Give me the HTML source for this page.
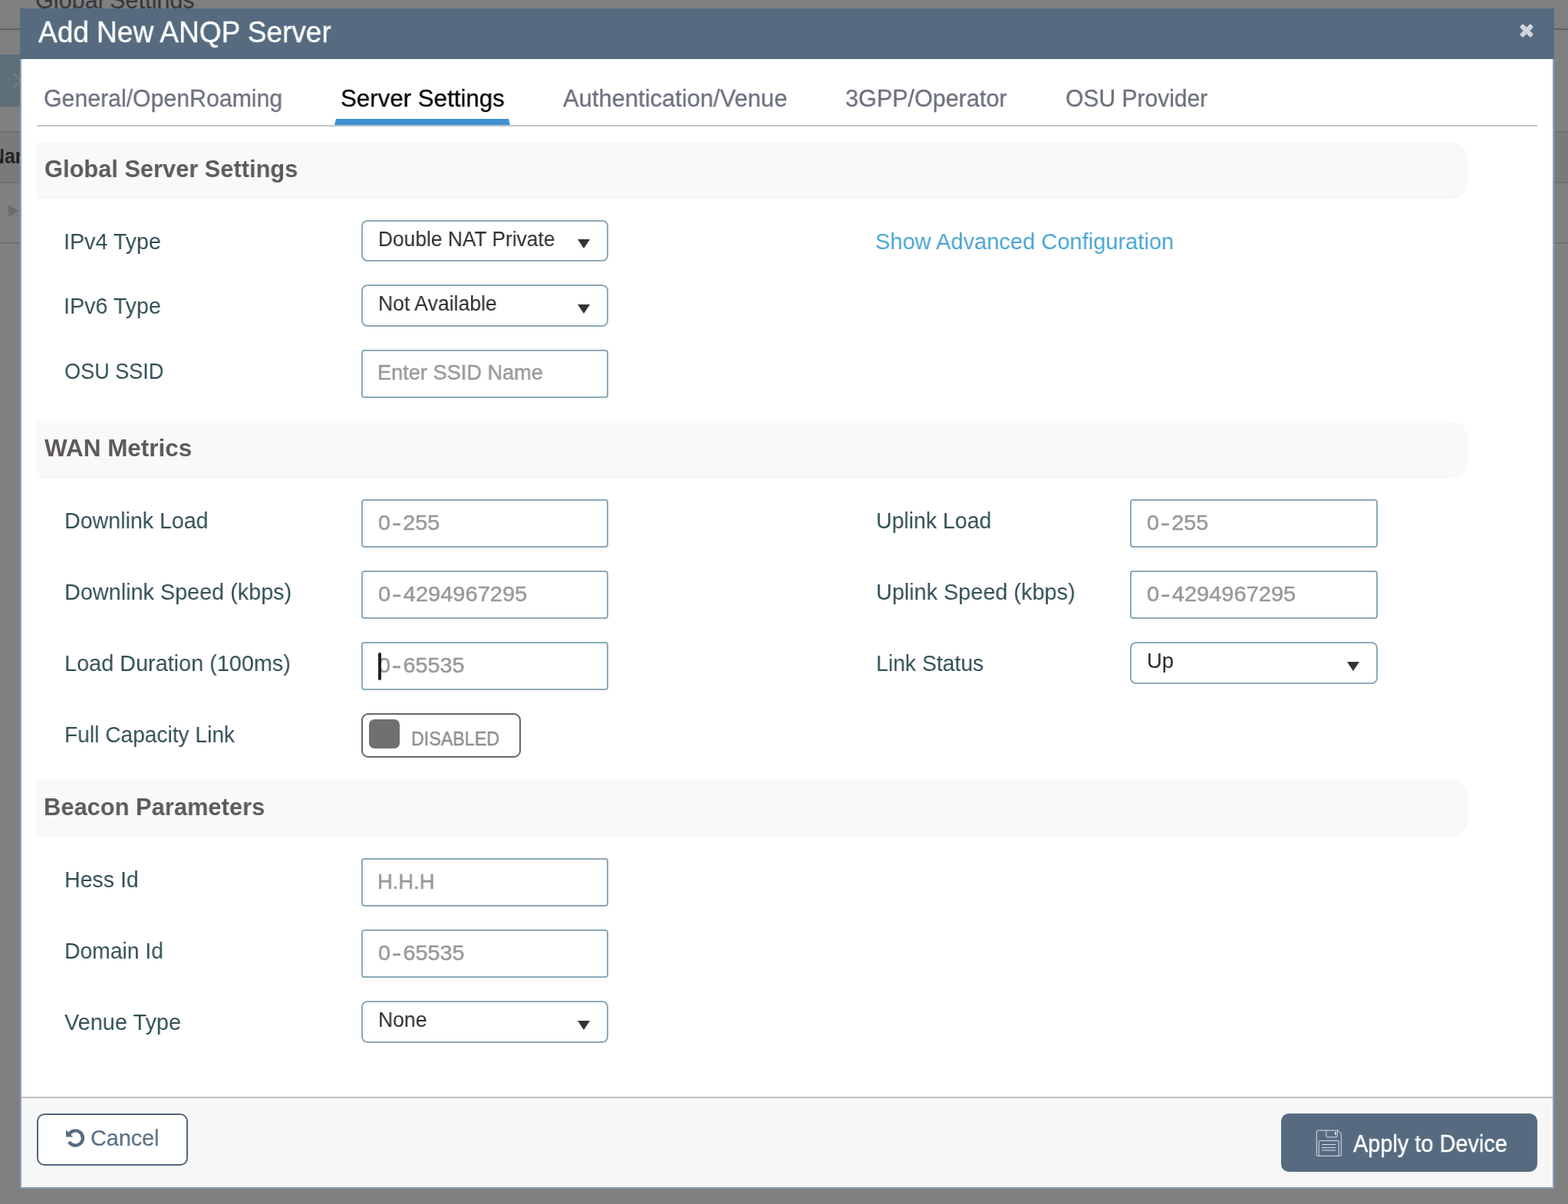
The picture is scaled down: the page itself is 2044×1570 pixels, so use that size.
<!DOCTYPE html>
<html lang="en">
<head>
<meta charset="utf-8">
<title>Add New ANQP Server</title>
<style>
:root{
--u:calc(100vw/2044);
--overlay:#808080;
--header:#566b80;
--mborder:#8ba0bb;
--tab:#6c707d;
--tabact:#000000;
--navline:#c2c6cc;
--bar:#4091d4;
--secbg:#f9f9f9;
--sectxt:#5f5a5a;
--label:#314f54;
--selborder:#8ca8ba;
--seltxt:#303030;
--inborder:#8ca8ba;
--ph:#999999;
--link:#49a5d4;
--footbg:#f7f7f7;
--footline:#c4c4c4;
--cancel:#586d84;
--cancelb:#4f657e;
--apply:#566b80;
}
*{box-sizing:border-box;margin:0;padding:0}
html,body{width:calc(2044*var(--u));height:calc(1570*var(--u));overflow:hidden}
body{position:relative;background:var(--overlay);font-family:"Liberation Sans",Arial,Helvetica,sans-serif;-webkit-font-smoothing:antialiased}
h1,h2,label,a,span{font:inherit;text-decoration:none}
.abs,.t{position:absolute}
.t{white-space:nowrap;line-height:1;transform-origin:0 0;will-change:transform}
.hy{display:inline-block;transform:scaleX(1.3);margin:0 calc(3.4*var(--u))}
/* dimmed page behind the dialog */
.bg-line{position:absolute;left:0;width:calc(2044*var(--u));height:calc(2*var(--u));background:#616161}
.bg-band{position:absolute;left:0;width:calc(2044*var(--u));background:#7a7a7a}
.bg-side{position:absolute;left:0;top:calc(71*var(--u));width:calc(26*var(--u));height:calc(68*var(--u));background:#5e6f79}
/* dialog */
.modal{position:absolute;left:calc(26*var(--u));top:calc(11*var(--u));width:calc(2000*var(--u));height:calc(1539*var(--u));background:#fff;border:calc(2*var(--u)) solid var(--mborder);border-top:0}
.modal-header{position:absolute;left:calc(26*var(--u));top:calc(11*var(--u));width:calc(2000*var(--u));height:calc(66*var(--u));background:var(--header)}
.navline{position:absolute;left:calc(48*var(--u));top:calc(163*var(--u));width:calc(1956*var(--u));height:calc(2*var(--u));background:var(--navline)}
.bar{position:absolute;left:calc(436*var(--u));top:calc(155*var(--u));width:calc(229*var(--u));height:calc(8*var(--u));background:var(--bar);clip-path:polygon(calc(2*var(--u)) 0,calc(100% - calc(2*var(--u))) 0,100% 100%,0 100%)}
.secbox{position:absolute;left:calc(48*var(--u));width:calc(1865*var(--u));height:calc(72*var(--u));background:var(--secbg);border-radius:0 calc(22*var(--u)) calc(22*var(--u)) 0;box-shadow:0 calc(2*var(--u)) calc(2*var(--u)) rgba(0,0,0,.045)}
.sel{background:#fff;border:calc(2*var(--u)) solid var(--selborder);border-radius:calc(8*var(--u))}
.inp{background:#fff;border:calc(2*var(--u)) solid var(--inborder);border-radius:calc(4*var(--u))}
.tog{background:#fff;border:calc(2*var(--u)) solid #666;border-radius:calc(9*var(--u))}
.knob{background:#707070;border-radius:calc(7*var(--u))}
.caret{background:#222;border-radius:calc(2*var(--u));z-index:5}
.footer{position:absolute;left:calc(28*var(--u));top:calc(1430*var(--u));width:calc(1996*var(--u));height:calc(118*var(--u));background:var(--footbg);border-top:calc(2*var(--u)) solid var(--footline)}
.btn-cancel{position:absolute;left:calc(48*var(--u));top:calc(1452*var(--u));width:calc(197*var(--u));height:calc(68*var(--u));background:#fff;border:calc(2*var(--u)) solid var(--cancelb);border-radius:calc(10*var(--u))}
.btn-apply{position:absolute;left:calc(1670*var(--u));top:calc(1452*var(--u));width:calc(334*var(--u));height:calc(76*var(--u));background:var(--apply);border-radius:calc(10*var(--u))}
</style>
</head>
<body>
<!-- dimmed page behind the dialog -->
<div class="backdrop" aria-hidden="true">
<div class="bg-band" style="top:calc(172*var(--u));height:calc(66*var(--u))"></div>
<div class="bg-line" style="top:calc(37*var(--u))"></div>
<div class="bg-line" style="top:calc(171*var(--u));background:#717171"></div>
<div class="bg-line" style="top:calc(237*var(--u));background:#717171"></div>
<div class="bg-line" style="top:calc(316*var(--u));background:#717171"></div>
<div class="bg-side"></div>
<svg class="abs" style="width:calc(14*var(--u));height:calc(22*var(--u));left:calc(14*var(--u));top:calc(94*var(--u))" viewBox="0 0 14 22"><path d="M4 2 L13 11 L4 20" fill="none" stroke="#888483" stroke-width="1.2"/></svg>
<div class="t bgt" style="left:calc(45.70*var(--u));top:calc(-16.08*var(--u));font-size:calc(31.98*var(--u));font-weight:400;color:#38393e;transform:scaleX(0.9584);-webkit-text-stroke:calc(0.3*var(--u));">Global Settings</div>
<div class="t bgn" style="left:calc(-11.90*var(--u));top:calc(189.61*var(--u));font-size:calc(27.62*var(--u));font-weight:700;color:#212121;transform:scaleX(0.9000);">Name</div>
<svg class="abs" style="width:calc(13*var(--u));height:calc(16*var(--u));left:calc(11*var(--u));top:calc(267*var(--u))" viewBox="0 0 13 16"><path d="M0 0L13 8L0 16Z" fill="#6c6c6c"/></svg>
</div>

<!-- dialog -->
<div class="dialog" role="dialog" aria-modal="true" aria-labelledby="dlg-title">
<div class="modal"></div>
<header>
<div class="modal-header"></div>
<h1 class="t title" id="dlg-title" style="left:calc(50.45*var(--u));top:calc(23.14*var(--u));font-size:calc(38.81*var(--u));font-weight:400;color:#ffffff;transform:scaleX(0.9534);-webkit-text-stroke:calc(0.4*var(--u));">Add New ANQP Server</h1>
<svg class="abs" style="width:calc(24*var(--u));height:calc(24*var(--u));left:calc(1977.8*var(--u));top:calc(28.1*var(--u))" viewBox="-12 -12 24 24" role="img" aria-label="Close"><g fill="#d1d5dc"><rect x="-9.9" y="-3" width="19.8" height="6" rx="1.5" transform="rotate(45)"/><rect x="-9.9" y="-3" width="19.8" height="6" rx="1.5" transform="rotate(-45)"/></g></svg>
</header>
<nav>
<div class="navline"></div>
<div class="bar"></div>
<a class="t tab" style="left:calc(56.70*var(--u));top:calc(111.92*var(--u));font-size:calc(31.98*var(--u));font-weight:400;color:#6c707d;transform:scaleX(0.9465);-webkit-text-stroke:calc(0.3*var(--u));">General/OpenRoaming</a>
<a class="t tab act" style="left:calc(443.74*var(--u));top:calc(111.92*var(--u));font-size:calc(31.98*var(--u));font-weight:400;color:#000000;transform:scaleX(0.9780);-webkit-text-stroke:calc(0.3*var(--u));">Server Settings</a>
<a class="t tab" style="left:calc(733.86*var(--u));top:calc(111.92*var(--u));font-size:calc(31.98*var(--u));font-weight:400;color:#6c707d;transform:scaleX(0.9673);-webkit-text-stroke:calc(0.3*var(--u));">Authentication/Venue</a>
<a class="t tab" style="left:calc(1102.43*var(--u));top:calc(111.92*var(--u));font-size:calc(31.98*var(--u));font-weight:400;color:#6c707d;transform:scaleX(0.9557);-webkit-text-stroke:calc(0.3*var(--u));">3GPP/Operator</a>
<a class="t tab" style="left:calc(1389.47*var(--u));top:calc(111.92*var(--u));font-size:calc(31.98*var(--u));font-weight:400;color:#6c707d;transform:scaleX(0.9393);-webkit-text-stroke:calc(0.3*var(--u));">OSU Provider</a>
</nav>
<form>
<section>
<div class="secbox" style="top:calc(185*var(--u))"></div>
<h2 class="t sec" style="left:calc(57.67*var(--u));top:calc(205.41*var(--u));font-size:calc(31.40*var(--u));font-weight:700;color:#5f5a5a;transform:scaleX(0.9809);">Global Server Settings</h2>
<div class="row">
<label class="t lbl" style="left:calc(83.09*var(--u));top:calc(299.28*var(--u));font-size:calc(30.38*var(--u));font-weight:400;color:#314f54;transform:scaleX(0.9424);">IPv4 Type</label>
<div class="abs sel" style="left:calc(471*var(--u));top:calc(287*var(--u));width:calc(322*var(--u));height:calc(54*var(--u))"></div>
<span class="t sv" style="left:calc(493.06*var(--u));top:calc(297.74*var(--u));font-size:calc(27.47*var(--u));font-weight:400;color:#303030;transform:scaleX(0.9590);-webkit-text-stroke:calc(0.1*var(--u));">Double NAT Private</span>
<svg class="abs" style="width:calc(16*var(--u));height:calc(12*var(--u));left:calc(753*var(--u));top:calc(312*var(--u))" viewBox="0 0 16 12" aria-hidden="true"><path d="M0 0H16L8.0 12Z" fill="#333"/></svg>
</div>
<a class="t link" style="left:calc(1141.16*var(--u));top:calc(299.28*var(--u));font-size:calc(30.38*var(--u));font-weight:400;color:#49a5d4;transform:scaleX(0.9562);">Show Advanced Configuration</a>
<div class="row">
<label class="t lbl" style="left:calc(83.09*var(--u));top:calc(383.28*var(--u));font-size:calc(30.38*var(--u));font-weight:400;color:#314f54;transform:scaleX(0.9424);">IPv6 Type</label>
<div class="abs sel" style="left:calc(471*var(--u));top:calc(371*var(--u));width:calc(322*var(--u));height:calc(55*var(--u))"></div>
<span class="t sv" style="left:calc(493.06*var(--u));top:calc(381.74*var(--u));font-size:calc(27.47*var(--u));font-weight:400;color:#303030;transform:scaleX(0.9678);-webkit-text-stroke:calc(0.1*var(--u));">Not Available</span>
<svg class="abs" style="width:calc(16*var(--u));height:calc(12*var(--u));left:calc(753*var(--u));top:calc(396.5*var(--u))" viewBox="0 0 16 12" aria-hidden="true"><path d="M0 0H16L8.0 12Z" fill="#333"/></svg>
</div>
<div class="row">
<label class="t lbl" style="left:calc(83.75*var(--u));top:calc(468.28*var(--u));font-size:calc(30.38*var(--u));font-weight:400;color:#314f54;transform:scaleX(0.8905);">OSU SSID</label>
<div class="abs inp" style="left:calc(471*var(--u));top:calc(456*var(--u));width:calc(322*var(--u));height:calc(63*var(--u))"></div>
<span class="t ph" style="left:calc(492.43*var(--u));top:calc(470.88*var(--u));font-size:calc(28.49*var(--u));font-weight:400;color:#999999;transform:scaleX(0.9534);-webkit-text-stroke:calc(0.5*var(--u));">Enter SSID Name</span>
</div>
</section>
<section>
<div class="secbox" style="top:calc(549*var(--u))"></div>
<h2 class="t sec" style="left:calc(58.28*var(--u));top:calc(569.41*var(--u));font-size:calc(31.40*var(--u));font-weight:700;color:#5f5a5a;transform:scaleX(1.0022);">WAN Metrics</h2>
<div class="row">
<label class="t lbl" style="left:calc(84.20*var(--u));top:calc(663.28*var(--u));font-size:calc(30.38*var(--u));font-weight:400;color:#314f54;transform:scaleX(0.9414);">Downlink Load</label>
<div class="abs inp" style="left:calc(471*var(--u));top:calc(651*var(--u));width:calc(322*var(--u));height:calc(63*var(--u))"></div>
<span class="t ph" style="left:calc(492.94*var(--u));top:calc(666.88*var(--u));font-size:calc(28.49*var(--u));font-weight:400;color:#999999;transform:scaleX(1.0066);-webkit-text-stroke:calc(0.5*var(--u));">0<span class="hy">-</span>255</span>
</div>
<div class="row">
<label class="t lbl" style="left:calc(1141.69*var(--u));top:calc(663.28*var(--u));font-size:calc(30.38*var(--u));font-weight:400;color:#314f54;transform:scaleX(0.9376);">Uplink Load</label>
<div class="abs inp" style="left:calc(1473*var(--u));top:calc(651*var(--u));width:calc(323*var(--u));height:calc(63*var(--u))"></div>
<span class="t ph" style="left:calc(1494.94*var(--u));top:calc(666.88*var(--u));font-size:calc(28.49*var(--u));font-weight:400;color:#999999;transform:scaleX(1.0066);-webkit-text-stroke:calc(0.5*var(--u));">0<span class="hy">-</span>255</span>
</div>
<div class="row">
<label class="t lbl" style="left:calc(84.20*var(--u));top:calc(756.28*var(--u));font-size:calc(30.38*var(--u));font-weight:400;color:#314f54;transform:scaleX(0.9483);">Downlink Speed (kbps)</label>
<div class="abs inp" style="left:calc(471*var(--u));top:calc(744*var(--u));width:calc(322*var(--u));height:calc(63*var(--u))"></div>
<span class="t ph" style="left:calc(492.91*var(--u));top:calc(759.88*var(--u));font-size:calc(28.49*var(--u));font-weight:400;color:#999999;transform:scaleX(1.0196);-webkit-text-stroke:calc(0.5*var(--u));">0<span class="hy">-</span>4294967295</span>
</div>
<div class="row">
<label class="t lbl" style="left:calc(1141.69*var(--u));top:calc(756.28*var(--u));font-size:calc(30.38*var(--u));font-weight:400;color:#314f54;transform:scaleX(0.9491);">Uplink Speed (kbps)</label>
<div class="abs inp" style="left:calc(1473*var(--u));top:calc(744*var(--u));width:calc(323*var(--u));height:calc(63*var(--u))"></div>
<span class="t ph" style="left:calc(1494.91*var(--u));top:calc(759.88*var(--u));font-size:calc(28.49*var(--u));font-weight:400;color:#999999;transform:scaleX(1.0196);-webkit-text-stroke:calc(0.5*var(--u));">0<span class="hy">-</span>4294967295</span>
</div>
<div class="row">
<label class="t lbl" style="left:calc(84.20*var(--u));top:calc(849.28*var(--u));font-size:calc(30.38*var(--u));font-weight:400;color:#314f54;transform:scaleX(0.9493);">Load Duration (100ms)</label>
<div class="abs inp" style="left:calc(471*var(--u));top:calc(837*var(--u));width:calc(322*var(--u));height:calc(63*var(--u))"></div>
<span class="t ph" style="left:calc(492.92*var(--u));top:calc(852.88*var(--u));font-size:calc(28.49*var(--u));font-weight:400;color:#999999;transform:scaleX(1.0108);-webkit-text-stroke:calc(0.5*var(--u));">0<span class="hy">-</span>65535</span>
<div class="abs caret" style="left:calc(493*var(--u));top:calc(851*var(--u));width:calc(4*var(--u));height:calc(36*var(--u))"></div>
</div>
<div class="row">
<label class="t lbl" style="left:calc(1142.20*var(--u));top:calc(849.28*var(--u));font-size:calc(30.38*var(--u));font-weight:400;color:#314f54;transform:scaleX(0.9339);">Link Status</label>
<div class="abs sel" style="left:calc(1473*var(--u));top:calc(837*var(--u));width:calc(323*var(--u));height:calc(55*var(--u))"></div>
<span class="t sv" style="left:calc(1495.47*var(--u));top:calc(847.74*var(--u));font-size:calc(27.47*var(--u));font-weight:400;color:#303030;transform:scaleX(0.9867);-webkit-text-stroke:calc(0.1*var(--u));">Up</span>
<svg class="abs" style="width:calc(16*var(--u));height:calc(12*var(--u));left:calc(1755.5*var(--u));top:calc(863*var(--u))" viewBox="0 0 16 12" aria-hidden="true"><path d="M0 0H16L8.0 12Z" fill="#333"/></svg>
</div>
<div class="row">
<label class="t lbl" style="left:calc(84.29*var(--u));top:calc(942.28*var(--u));font-size:calc(30.38*var(--u));font-weight:400;color:#314f54;transform:scaleX(0.9262);">Full Capacity Link</label>
<div class="abs tog" style="left:calc(471*var(--u));top:calc(930*var(--u));width:calc(208*var(--u));height:calc(58*var(--u))"></div>
<div class="abs knob" style="left:calc(481*var(--u));top:calc(938*var(--u));width:calc(40*var(--u));height:calc(38*var(--u))"></div>
<span class="t tg" style="left:calc(535.92*var(--u));top:calc(951.46*var(--u));font-size:calc(25.44*var(--u));font-weight:400;color:#8f8f8f;transform:scaleX(0.9143);-webkit-text-stroke:calc(0.5*var(--u));">DISABLED</span>
</div>
</section>
<section>
<div class="secbox" style="top:calc(1017*var(--u))"></div>
<h2 class="t sec" style="left:calc(57.06*var(--u));top:calc(1037.41*var(--u));font-size:calc(31.40*var(--u));font-weight:700;color:#5f5a5a;transform:scaleX(0.9832);">Beacon Parameters</h2>
<div class="row">
<label class="t lbl" style="left:calc(84.20*var(--u));top:calc(1131.28*var(--u));font-size:calc(30.38*var(--u));font-weight:400;color:#314f54;transform:scaleX(0.9389);">Hess Id</label>
<div class="abs inp" style="left:calc(471*var(--u));top:calc(1119*var(--u));width:calc(322*var(--u));height:calc(63*var(--u))"></div>
<span class="t ph" style="left:calc(492.43*var(--u));top:calc(1134.88*var(--u));font-size:calc(28.49*var(--u));font-weight:400;color:#999999;transform:scaleX(0.9603);-webkit-text-stroke:calc(0.5*var(--u));">H.H.H</span>
</div>
<div class="row">
<label class="t lbl" style="left:calc(84.20*var(--u));top:calc(1224.28*var(--u));font-size:calc(30.38*var(--u));font-weight:400;color:#314f54;transform:scaleX(0.9314);">Domain Id</label>
<div class="abs inp" style="left:calc(471*var(--u));top:calc(1212*var(--u));width:calc(322*var(--u));height:calc(63*var(--u))"></div>
<span class="t ph" style="left:calc(492.92*var(--u));top:calc(1227.88*var(--u));font-size:calc(28.49*var(--u));font-weight:400;color:#999999;transform:scaleX(1.0108);-webkit-text-stroke:calc(0.5*var(--u));">0<span class="hy">-</span>65535</span>
</div>
<div class="row">
<label class="t lbl" style="left:calc(84.03*var(--u));top:calc(1317.28*var(--u));font-size:calc(30.38*var(--u));font-weight:400;color:#314f54;transform:scaleX(0.9509);">Venue Type</label>
<div class="abs sel" style="left:calc(471*var(--u));top:calc(1305*var(--u));width:calc(322*var(--u));height:calc(55*var(--u))"></div>
<span class="t sv" style="left:calc(493.06*var(--u));top:calc(1315.74*var(--u));font-size:calc(27.47*var(--u));font-weight:400;color:#303030;transform:scaleX(0.9663);-webkit-text-stroke:calc(0.1*var(--u));">None</span>
<svg class="abs" style="width:calc(16*var(--u));height:calc(12*var(--u));left:calc(753*var(--u));top:calc(1331*var(--u))" viewBox="0 0 16 12" aria-hidden="true"><path d="M0 0H16L8.0 12Z" fill="#333"/></svg>
</div>
</section>
</form>
<footer>
<div class="footer"></div>
<div class="btn-cancel"></div>
<svg class="abs" style="width:calc(27*var(--u));height:calc(27*var(--u));left:calc(85*var(--u));top:calc(1471*var(--u))" viewBox="0 0 27 27"><path d="M4.6 8.94A9.6 9.6 0 1 1 4.99 17.8" fill="none" stroke="#586d84" stroke-width="4.4"/><path d="M1 2.3V11.4H10.2Z" fill="#586d84"/></svg>
<span class="t btn" style="left:calc(117.68*var(--u));top:calc(1469.40*var(--u));font-size:calc(30.23*var(--u));font-weight:400;color:#586d84;transform:scaleX(0.9516);-webkit-text-stroke:calc(0.2*var(--u));">Cancel</span>
<div class="btn-apply"></div>
<svg class="abs" style="width:calc(35*var(--u));height:calc(36*var(--u));left:calc(1715*var(--u));top:calc(1473*var(--u))" viewBox="0 0 35 36"><g fill="none" stroke="#dfe3e9" stroke-width="1"><path d="M3 1H29.2L33.3 5.3V32.8Q33.3 34.3 31.8 34.3H2.8Q1.3 34.3 1.3 32.8V2.6Q1.3 1 3 1Z"/><path d="M13.8 1V8.3Q13.8 9.8 15.3 9.8H26.8Q28.3 9.8 28.3 8.3V1"/><path d="M4.2 34.3V15.9Q4.2 14.4 5.7 14.4H28.6Q30.1 14.4 30.1 15.9V34.3"/><path d="M8.2 19.5H26.2M8.2 23.5H26.2M8.2 27H26.2"/></g><rect x="25" y="2.7" width="1.8" height="4.4" fill="#dfe3e9"/></svg>
<span class="t btn" style="left:calc(1764.48*var(--u));top:calc(1476.16*var(--u));font-size:calc(30.52*var(--u));font-weight:400;color:#ffffff;transform:scaleX(0.9477);-webkit-text-stroke:calc(0.4*var(--u));">Apply to Device</span>
</footer>
</div>
</body>
</html>
